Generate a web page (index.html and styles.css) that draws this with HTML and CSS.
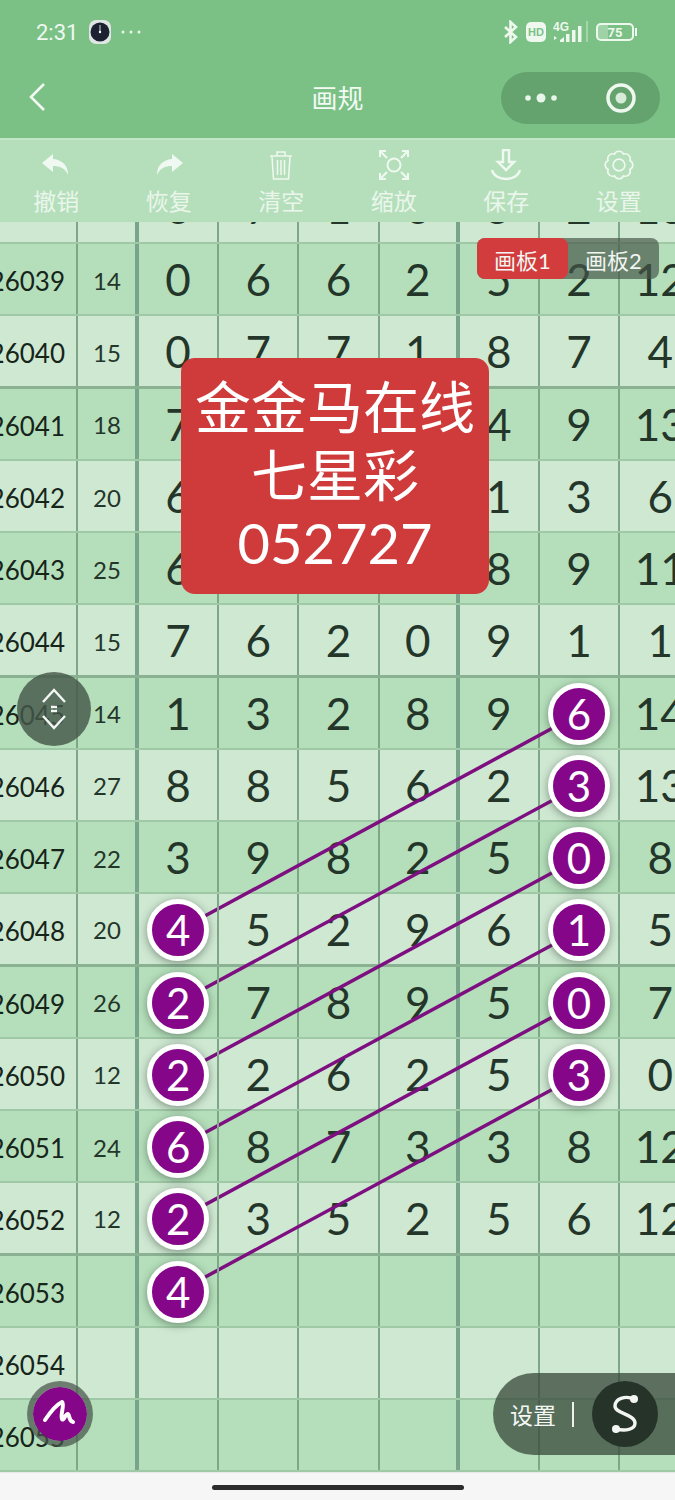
FILE: index.html
```html
<!DOCTYPE html>
<html lang="zh">
<head>
<meta charset="utf-8">
<title>画规</title>
<link rel="stylesheet" href="styles.css">
</head>
<body>
<div class="phone">
  <div class="status">
    <div class="status-left">
      <span class="time">2:31</span>
      <svg class="clock" viewBox="0 0 22 24"><rect x="0" y="0" width="22" height="24" rx="7" fill="#dfe6e4"/><circle cx="11" cy="12" r="9.500" fill="#1d2230"/><path d="M11 5v7" stroke="#cfd3da" stroke-width="1"/><circle cx="11" cy="12" r="1.200" fill="#fff"/></svg>
      <svg class="more" viewBox="0 0 20 4"><circle cx="2" cy="2" r="1.500"/><circle cx="10" cy="2" r="1.500"/><circle cx="18" cy="2" r="1.500"/></svg>
    </div>
    <div class="status-right">
      <svg class="bt" viewBox="0 0 14 24"><path d="M1 7l11 10-5.500 5V2l5.500 5L1 17" fill="none" stroke="#eef8ef" stroke-width="2.600"/></svg>
      <span class="hd">HD</span>
      <svg class="signal" viewBox="0 0 40 24"><text x="0" y="11" class="g4">4G</text><path d="M1 16l3 2-3 2zM7 20l4-3v5H7zM13 14h3.500v8H13zM19 10h3.500v12H19zM25 6h3.500v16H25z" fill="#eef8ef"/><path d="M33 1h2v21h-2z" fill="#a5d5ab"/></svg>
      <span class="battery"><span class="bat-num">75</span></span>
      <span class="bat-tip"></span>
    </div>
  </div>
  <div class="nav">
    <svg class="back" viewBox="0 0 18 30"><path d="M16 2L3 15l13 13" fill="none" stroke="#f2faf3" stroke-width="2.600"/></svg>
    <div class="title">画规</div>
    <div class="capsule">
      <svg class="cap-dots" viewBox="0 0 32 12"><circle cx="3" cy="6" r="2.800"/><circle cx="16" cy="6" r="4.500"/><circle cx="29" cy="6" r="2.800"/></svg>
      <svg class="cap-target" viewBox="0 0 32 32"><circle cx="16" cy="16" r="13" fill="none" stroke="#eef8ef" stroke-width="3.500"/><circle cx="16" cy="16" r="5.500" fill="#d6ecd8"/></svg>
    </div>
  </div>
  <div class="toolbar">
    <div class="tool">
      <svg viewBox="0 0 32 32"><path d="M13 5L2 14l11 9v-6c7 0 12 2 15 9 0-9-5-15-15-16z" class="fill"/></svg>
      <span>撤销</span>
    </div>
    <div class="tool">
      <svg viewBox="0 0 32 32"><path d="M19 5l11 9-11 9v-6c-7 0-12 2-15 9 0-9 5-15 15-16z" class="fill"/></svg>
      <span>恢复</span>
    </div>
    <div class="tool">
      <svg viewBox="0 0 32 32"><path d="M5 7h22M12 7V3h8v4M7 8l1.500 22h15L25 8M12.500 11v15M16 11v15M19.500 11v15" class="line thin"/></svg>
      <span>清空</span>
    </div>
    <div class="tool">
      <svg viewBox="0 0 32 32"><path d="M2 8V2h6M24 2h6v6M30 24v6h-6M8 30H2v-6M3 3l6 6M29 3l-6 6M29 29l-6-6M3 29l6-6" class="line"/><circle cx="16" cy="16" r="6.500" class="line"/></svg>
      <span>缩放</span>
    </div>
    <div class="tool">
      <svg viewBox="0 0 32 32"><path d="M13 1h6v12h5l-8 8-8-8h5zM2 21c3 12 25 12 28 0" class="line heavy"/></svg>
      <span>保存</span>
    </div>
    <div class="tool">
      <svg viewBox="0 0 30 30"><path d="M25.200 19.200A4.600 4.600 0 0 1 19.200 25.200A4.600 4.600 0 0 1 10.800 25.200A4.600 4.600 0 0 1 4.800 19.200A4.600 4.600 0 0 1 4.800 10.800A4.600 4.600 0 0 1 10.800 4.800A4.600 4.600 0 0 1 19.200 4.800A4.600 4.600 0 0 1 25.200 10.800A4.600 4.600 0 0 1 25.200 19.200Z" class="line thin"/><circle cx="15" cy="15" r="5.500" class="line thin"/></svg>
      <span>设置</span>
    </div>
  </div>

  <div class="board">
    <div class="grid">
      <div class="row light"><b>26038</b><i>16</i><u>6</u><u>7</u><u>1</u><u>6</u><u>5</u><u>2</u><u>13</u></div>
      <div class="row dark"><b>26039</b><i>14</i><u>0</u><u>6</u><u>6</u><u>2</u><u>5</u><u>2</u><u>12</u></div>
      <div class="row light thick"><b>26040</b><i>15</i><u>0</u><u>7</u><u>7</u><u>1</u><u>8</u><u>7</u><u>4</u></div>
      <div class="row dark"><b>26041</b><i>18</i><u>7</u><u>3</u><u>5</u><u>6</u><u>4</u><u>9</u><u>13</u></div>
      <div class="row light"><b>26042</b><i>20</i><u>6</u><u>2</u><u>8</u><u>9</u><u>1</u><u>3</u><u>6</u></div>
      <div class="row dark"><b>26043</b><i>25</i><u>6</u><u>4</u><u>1</u><u>0</u><u>8</u><u>9</u><u>11</u></div>
      <div class="row light thick"><b>26044</b><i>15</i><u>7</u><u>6</u><u>2</u><u>0</u><u>9</u><u>1</u><u>1</u></div>
      <div class="row dark"><b>26045</b><i>14</i><u>1</u><u>3</u><u>2</u><u>8</u><u>9</u><u class="mark"><em>6</em></u><u>14</u></div>
      <div class="row light"><b>26046</b><i>27</i><u>8</u><u>8</u><u>5</u><u>6</u><u>2</u><u class="mark"><em>3</em></u><u>13</u></div>
      <div class="row dark"><b>26047</b><i>22</i><u>3</u><u>9</u><u>8</u><u>2</u><u>5</u><u class="mark"><em>0</em></u><u>8</u></div>
      <div class="row light thick"><b>26048</b><i>20</i><u class="mark"><em>4</em></u><u>5</u><u>2</u><u>9</u><u>6</u><u class="mark"><em>1</em></u><u>5</u></div>
      <div class="row dark"><b>26049</b><i>26</i><u class="mark"><em>2</em></u><u>7</u><u>8</u><u>9</u><u>5</u><u class="mark"><em>0</em></u><u>7</u></div>
      <div class="row light"><b>26050</b><i>12</i><u class="mark"><em>2</em></u><u>2</u><u>6</u><u>2</u><u>5</u><u class="mark"><em>3</em></u><u>0</u></div>
      <div class="row dark"><b>26051</b><i>24</i><u class="mark"><em>6</em></u><u>8</u><u>7</u><u>3</u><u>3</u><u>8</u><u>12</u></div>
      <div class="row light thick"><b>26052</b><i>12</i><u class="mark"><em>2</em></u><u>3</u><u>5</u><u>2</u><u>5</u><u>6</u><u>12</u></div>
      <div class="row dark"><b>26053</b><i></i><u class="mark"><em>4</em></u><u></u><u></u><u></u><u></u><u></u><u></u></div>
      <div class="row light"><b>26054</b><i></i><u></u><u></u><u></u><u></u><u></u><u></u><u></u></div>
      <div class="row dark"><b>26055</b><i></i><u></u><u></u><u></u><u></u><u></u><u></u><u></u></div>
      <svg class="links" viewBox="0 0 675 1300">
        <line x1="178" y1="758.500" x2="579" y2="541.800"/>
        <line x1="178" y1="830.700" x2="579" y2="614"/>
        <line x1="178" y1="903" x2="579" y2="686.300"/>
        <line x1="178" y1="975.200" x2="579" y2="758.500"/>
        <line x1="178" y1="1047.400" x2="579" y2="830.700"/>
        <line x1="178" y1="1119.700" x2="579" y2="903"/>
      </svg>
    </div>

    <div class="tabs">
      <span class="tab on">画板1</span>
      <span class="tab">画板2</span>
    </div>
    <div class="notice">
      <div>金金马在线</div>
      <div>七星彩</div>
      <div>052727</div>
    </div>
    <div class="scroll-btn">
      <svg viewBox="0 0 26 42"><path d="M2 14L13 2l11 12M2 28l11 12 11-12" fill="none" stroke="#f3f7f3" stroke-width="2.400"/><path d="M10 19h6M10 23h6" stroke="#f3f7f3" stroke-width="2.400"/></svg>
    </div>
    <div class="pen-btn">
      <svg viewBox="0 0 36 30"><path d="M3 21C7 15 14 6 20 3c3 2-2 13 0 17 1 3 4-6 6-5 2 1 0 6 5 8" fill="none" stroke="#fff" stroke-width="4" stroke-linecap="round" stroke-linejoin="round"/></svg>
    </div>
    <div class="dock">
      <span class="dock-label">设置</span>
      <span class="dock-sep"></span>
      <span class="dock-s">
        <svg viewBox="0 0 28 40"><path d="M23 5C14 1 4 5 4 12c0 8 20 8 20 17 0 7-10 8-19 6" fill="none" stroke="#f3f5f3" stroke-width="3.400"/><circle cx="23" cy="5" r="4" fill="#f3f5f3"/><circle cx="5" cy="35" r="4" fill="#f3f5f3"/></svg>
      </span>
    </div>
  </div>

  <div class="home"><span class="home-bar"></span></div>
</div>
</body>
</html>
```

FILE: styles.css
```css
* { box-sizing: border-box; }
html, body { margin: 0; padding: 0; }
body {
  width: 675px;
  height: 1500px;
  overflow: hidden;
  font-family: "Lato", "Noto Sans CJK SC", sans-serif;
  background: #f6f6f6;
}
.phone {
  width: 675px;
  height: 1500px;
  display: flex;
  flex-direction: column;
}

/* status bar */
.status {
  height: 68px;
  flex: none;
  background: #7bc185;
  display: flex;
  justify-content: space-between;
  align-items: center;
  padding: 0 38px 4px 36px;
  color: #eef8ef;
}
.status-left, .status-right { display: flex; align-items: center; }
.time { font-size: 22px; font-family: "Roboto", sans-serif; width: 53px; }
.clock { width: 22px; height: 24px; }
.more { width: 20px; height: 4px; margin-left: 10px; fill: #eef8ef; }
.bt { width: 14px; height: 24px; }
.hd {
  width: 20px;
  height: 20px;
  margin-left: 8px;
  border-radius: 5px;
  background: #eef8ef;
  color: #7bc185;
  font: 700 11px/20px "Liberation Sans", sans-serif;
  text-align: center;
}
.signal { width: 40px; height: 24px; margin-left: 7px; }
.g4 { font: 700 12px "Liberation Sans", sans-serif; fill: #eef8ef; }
.battery {
  width: 38px;
  height: 18px;
  margin-left: 3px;
  border: 2px solid #eef8ef;
  border-radius: 5px;
  display: flex;
  align-items: center;
  justify-content: center;
  background: linear-gradient(90deg, #9fd3a6 0, #9fd3a6 30%, transparent 30%);
}
.bat-num { font: 700 13px "Roboto", sans-serif; color: #eef8ef; }
.bat-tip { width: 2px; height: 8px; margin-left: 1px; background: #eef8ef; }

/* navigation */
.nav {
  height: 70px;
  flex: none;
  background: #7bc185;
  position: relative;
  display: flex;
  align-items: center;
  justify-content: center;
}
.back { position: absolute; left: 28px; top: 14px; width: 18px; height: 30px; }
.title { color: #f2faf3; font-size: 26px; margin-top: -14px; }
.capsule {
  position: absolute;
  left: 501px;
  top: 4px;
  width: 159px;
  height: 52px;
  border-radius: 26px;
  background: #64a36e;
  display: flex;
  align-items: center;
  justify-content: space-between;
  padding: 0 23px 0 24px;
}
.cap-dots { width: 32px; height: 12px; fill: #e8f5ea; }
.cap-target { width: 32px; height: 32px; }

/* toolbar */
.toolbar {
  height: 84px;
  flex: none;
  background: #b5dfbb;
  border-top: 2px solid #c3e5c8;
  display: grid;
  grid-template-columns: repeat(6, 1fr);
  position: relative;
  z-index: 3;
}
.tool {
  display: flex;
  flex-direction: column;
  align-items: center;
  color: #eaf6ec;
  font-size: 23px;
  line-height: 30px;
  padding-top: 9px;
}
.tool svg { width: 32px; height: 32px; margin-bottom: 5px; }
.tool span { display: block; }
.fill { fill: #f0f9f1; }
.line { fill: none; stroke: #f0f9f1; stroke-width: 2; }
.thin { stroke-width: 1.500; }
.heavy { stroke-width: 2.400; }

/* board */
.board {
  flex: 1;
  position: relative;
  overflow: hidden;
  min-height: 0;
  height: 1250px;
}
.grid { position: relative; margin-top: -50px; }
.row {
  display: grid;
  grid-template-columns: 78px 61px repeat(7, 80.200px);
  height: 72.240px;
  border-bottom: 2px solid #9fc8a6;
  color: #24362a;
}
.row.dark { background: #b5dfbb; }
.row.light { background: #cfe8d2; }
.row.thick { border-bottom: 3px solid #8bb193; }
.row > * {
  display: flex;
  align-items: center;
  justify-content: center;
  font-style: normal;
  text-decoration: none;
  border-right: 2px solid #7ea787;
}
.row > b {
  font-weight: 400;
  font-size: 26px;
  justify-content: flex-end;
  padding-right: 11px;
  padding-top: 4px;
  color: #16241a;
}
.row > i { font-size: 24px; border-right: 4px solid #78a48c; padding-left: 1px; padding-top: 2px; }
.row > u { font-size: 44px; font-weight: 400; }
.row > u:nth-child(6) { border-right: 4px solid #78a48c; }
.row > u:last-child { border-right: 0; white-space: nowrap; }
.row > u.mark { position: relative; z-index: 2; padding-top: 2px; }
.mark em {
  width: 62px;
  height: 62px;
  flex: none;
  border-radius: 50%;
  border: 5px solid #fff;
  background: #86068a;
  color: #fff;
  font-style: normal;
  font-size: 42px;
  font-weight: 400;
  display: flex;
  align-items: center;
  justify-content: center;
  box-shadow: 0 2px 8px rgba(40, 60, 45, 0.5);
}
.links {
  position: absolute;
  left: 0;
  top: 0;
  width: 675px;
  height: 1300px;
  z-index: 1;
  pointer-events: none;
}
.links line { stroke: #7d0f80; stroke-width: 3.500; }

.tabs {
  position: absolute;
  left: 477px;
  top: 16px;
  width: 182px;
  height: 41px;
  display: flex;
  border-radius: 8px;
  background: rgba(70, 85, 72, 0.68);
  z-index: 4;
}
.tab {
  flex: 1;
  font-size: 22px;
  color: #f2f5f2;
  display: flex;
  align-items: center;
  justify-content: center;
  border-radius: 8px;
}
.tab.on { background: #d23c3d; }

.notice {
  position: absolute;
  left: 181px;
  top: 136px;
  width: 308px;
  height: 236px;
  border-radius: 14px;
  background: #cf3a3a;
  color: #fff;
  font-size: 56px;
  line-height: 68px;
  text-align: center;
  padding-top: 15px;
  z-index: 4;
}

.scroll-btn {
  position: absolute;
  left: 17px;
  top: 450px;
  width: 74px;
  height: 74px;
  border-radius: 50%;
  background: rgba(70, 88, 74, 0.82);
  display: flex;
  align-items: center;
  justify-content: center;
  z-index: 4;
}
.scroll-btn svg { width: 26px; height: 42px; }

.pen-btn {
  position: absolute;
  left: 27px;
  top: 1159px;
  width: 66px;
  height: 66px;
  border-radius: 50%;
  border: 6px solid rgba(70, 85, 75, 0.72);
  background: #86068a;
  background-clip: padding-box;
  display: flex;
  align-items: center;
  justify-content: center;
  z-index: 4;
}
.pen-btn svg { width: 36px; height: 30px; }

.dock {
  position: absolute;
  left: 493px;
  top: 1151px;
  width: 182px;
  height: 82px;
  border-radius: 41px 0 0 41px;
  background: rgba(55, 72, 58, 0.75);
  display: flex;
  align-items: center;
  padding-left: 17px;
  z-index: 4;
}
.dock-label { color: #f4f6f4; font-size: 23px; }
.dock-sep { width: 2px; height: 25px; margin-left: 16px; background: #eef1ee; }
.dock-s {
  width: 66px;
  height: 66px;
  margin-left: 18px;
  border-radius: 50%;
  background: #263329;
  display: flex;
  align-items: center;
  justify-content: center;
}
.dock-s svg { width: 28px; height: 40px; }

/* home indicator */
.home {
  height: 28px;
  flex: none;
  background: #f6f6f6;
  border-top: 1px solid #e6e9e6;
  display: flex;
  justify-content: center;
  align-items: center;
  position: relative;
  z-index: 5;
}
.home-bar { width: 252px; height: 5px; border-radius: 3px; background: #2c2c2c; margin-left: 1px; margin-top: 2px; }
```
